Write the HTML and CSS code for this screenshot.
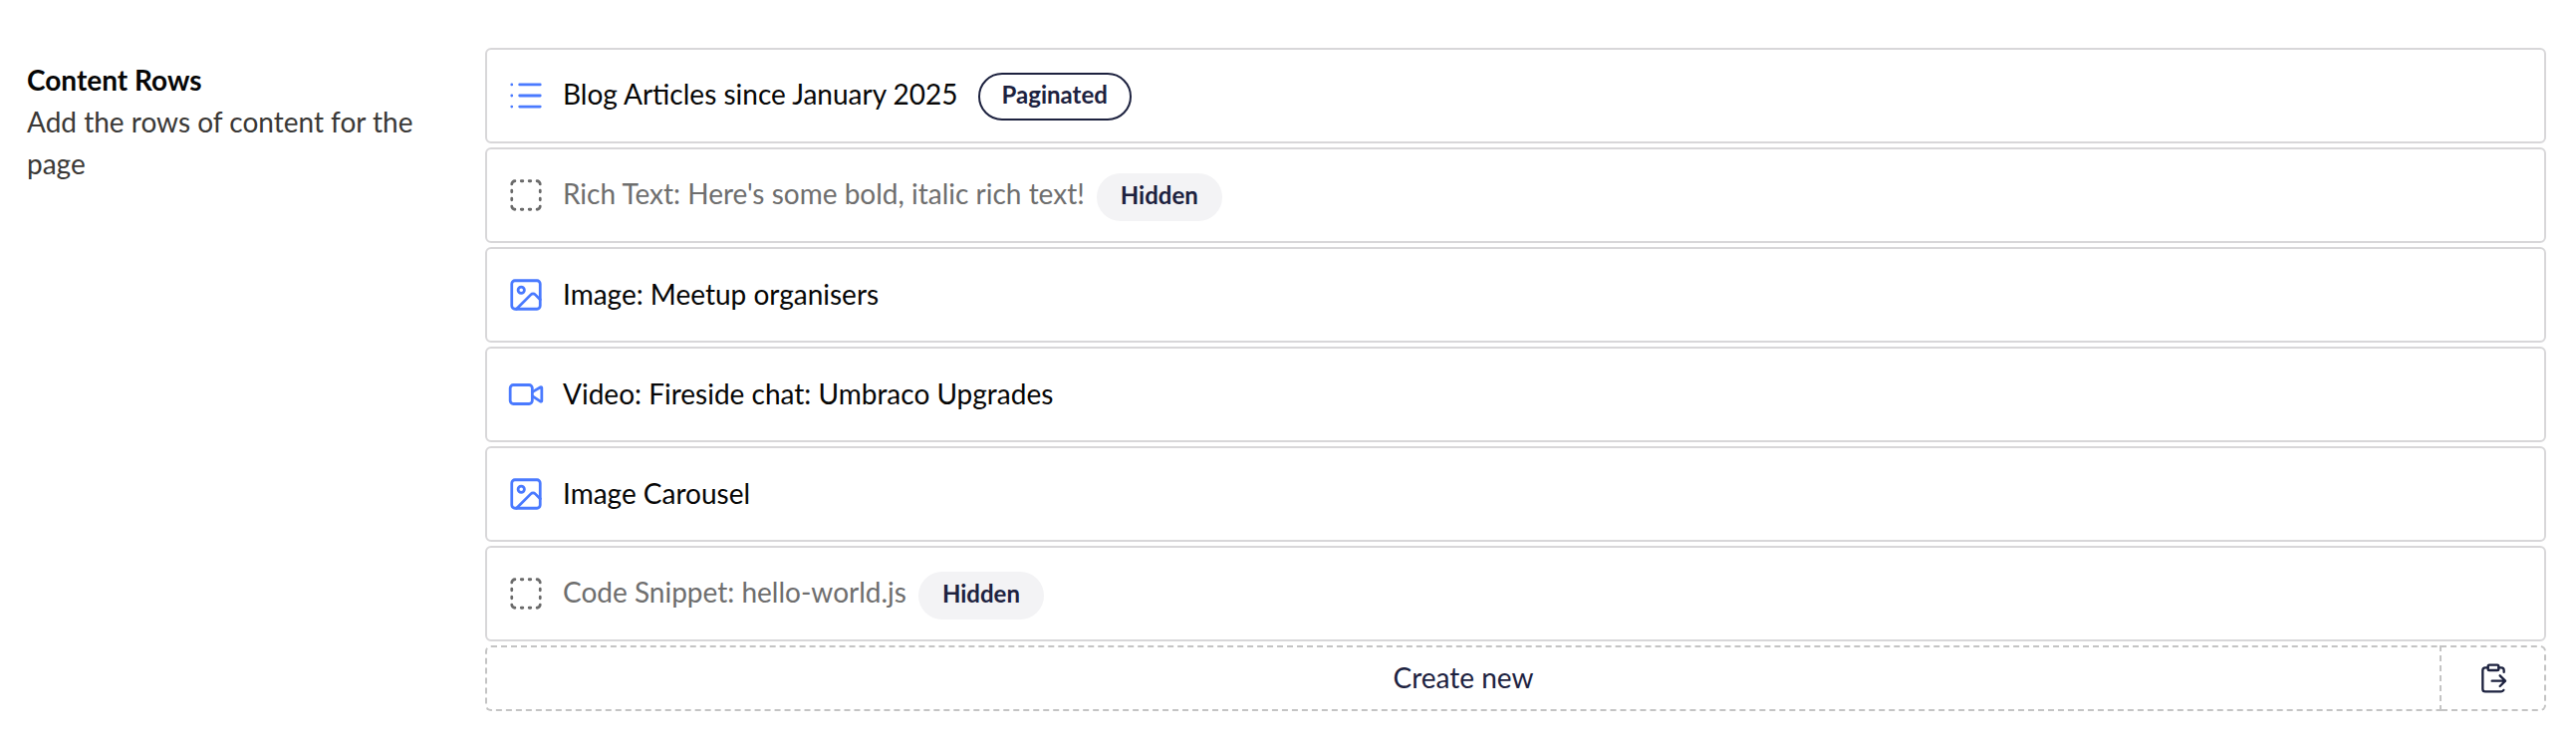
FILE: index.html
```html
<!DOCTYPE html>
<html lang="en">
<head>
<meta charset="utf-8">
<title>Content Rows</title>
<link rel="stylesheet" href="styles.css">
</head>
<body>
<svg class="sprite" aria-hidden="true">
  <symbol id="icon-list" viewBox="0 0 24 24"><path d="M3 5h.01M3 12h.01M3 19h.01M8 5h13M8 12h13M8 19h13"/></symbol>
  <symbol id="icon-hidden" viewBox="0 0 24 24"><path d="M5 3a2 2 0 0 0-2 2M19 3a2 2 0 0 1 2 2M21 19a2 2 0 0 1-2 2M5 21a2 2 0 0 1-2-2M9 3h1M9 21h1M14 3h1M14 21h1M3 9v1M21 9v1M3 14v1M21 14v1"/></symbol>
  <symbol id="icon-image" viewBox="0 0 24 24"><rect x="3" y="3" width="18" height="18" rx="2"/><circle cx="9" cy="9" r="2"/><path d="m21 15-3.086-3.086a2 2 0 0 0-2.828 0L6 21"/></symbol>
  <symbol id="icon-video" viewBox="0 0 24 24"><path d="m16 13 5.223 3.482a.5.5 0 0 0 .777-.416V7.87a.5.5 0 0 0-.752-.432L16 10.5"/><rect x="2" y="6" width="14" height="12" rx="2"/></symbol>
  <symbol id="icon-paste" viewBox="0 0 24 24"><path d="M11 14h10M16 4h2a2 2 0 0 1 2 2v1.344M17 18l4-4-4-4M8 4H6a2 2 0 0 0-2 2v14a2 2 0 0 0 2 2h12a2 2 0 0 0 1.793-1.113"/><rect x="8" y="2" width="8" height="4" rx="1"/></symbol>
</svg>
<main class="property">
  <header class="property-info">
    <h1 class="property-label">Content Rows</h1>
    <p class="property-description">Add the rows of content for the page</p>
  </header>
  <section class="block-list">
    <article class="block"><svg class="icon"><use href="#icon-list"/></svg><span class="block-name">Blog Articles since January 2025</span><span class="tag tag-outline">Paginated</span></article>
    <article class="block block-muted"><svg class="icon"><use href="#icon-hidden"/></svg><span class="block-name">Rich Text: Here's some bold, italic rich text!</span><span class="tag">Hidden</span></article>
    <article class="block block-plain"><svg class="icon"><use href="#icon-image"/></svg><span class="block-name">Image: Meetup organisers</span></article>
    <article class="block block-plain"><svg class="icon"><use href="#icon-video"/></svg><span class="block-name">Video: Fireside chat: Umbraco Upgrades</span></article>
    <article class="block block-plain"><svg class="icon"><use href="#icon-image"/></svg><span class="block-name">Image Carousel</span></article>
    <article class="block block-muted"><svg class="icon"><use href="#icon-hidden"/></svg><span class="block-name">Code Snippet: hello-world.js</span><span class="tag">Hidden</span></article>
    <div class="actions">
      <button class="action create" type="button">Create new</button>
      <button class="action paste" type="button" aria-label="Paste"><svg class="icon icon-small"><use href="#icon-paste"/></svg></button>
    </div>
  </section>
</main>
</body>
</html>
```

FILE: styles.css
```css
* {
  box-sizing: border-box;
}

body {
  margin: 0;
  background: #fff;
  color: #060606;
  font-family: Lato, sans-serif;
  font-size: 28px;
  line-height: 42px;
}

.sprite {
  display: none;
}

.property {
  display: grid;
  grid-template-columns: 400px 1fr;
  column-gap: 60px;
  padding: 48px 30px 0 27px;
}

.property-info {
  padding-top: 11px;
}

.property-label,
.property-description {
  margin: 0;
  font-size: 28px;
}

.property-label {
  font-weight: 700;
}

.property-description {
  color: #3a3836;
}

.block-list {
  display: grid;
  gap: 4px;
}

.block {
  display: flex;
  align-items: center;
  height: 96px;
  padding: 0 20px;
  border: 2px solid #d8d7d9;
  border-radius: 6px;
}

.icon {
  flex: none;
  width: 38px;
  height: 38px;
  margin-right: 18px;
  fill: none;
  stroke: #4a7aff;
  stroke-width: 1.75;
  stroke-linecap: round;
  stroke-linejoin: round;
}

.block-name {
  padding-bottom: 5px;
  white-space: pre;
}

.block-plain .block-name {
  padding-bottom: 3px;
}

.block-muted {
  color: #6e6e6e;
}

.block-muted .icon {
  stroke: #6a6a6a;
}

.tag {
  height: 48px;
  margin: 4px 0 0 12px;
  padding: 0 24px;
  border-radius: 24px;
  background: #f3f3f5;
  color: #1d223f;
  font-size: 24px;
  font-weight: 700;
  line-height: 43px;
}

.tag-outline {
  margin: 2px 0 0 20px;
  padding: 0 22px;
  border: 2px solid #1d223f;
  background: #fff;
  line-height: 40px;
}

.actions {
  display: flex;
  height: 66px;
}

.action {
  display: flex;
  align-items: center;
  justify-content: center;
  padding: 0;
  border: 2px dashed #c4c4c4;
  background: transparent;
  color: #1d223f;
  font: inherit;
}

.create {
  flex: 1;
  padding-bottom: 3px;
  border-right: 0;
  border-radius: 6px 0 0 6px;
}

.paste {
  width: 107px;
  border-radius: 0 6px 6px 0;
}

.icon-small {
  width: 32px;
  height: 32px;
  margin: 0;
  stroke: #1d223f;
}
```
